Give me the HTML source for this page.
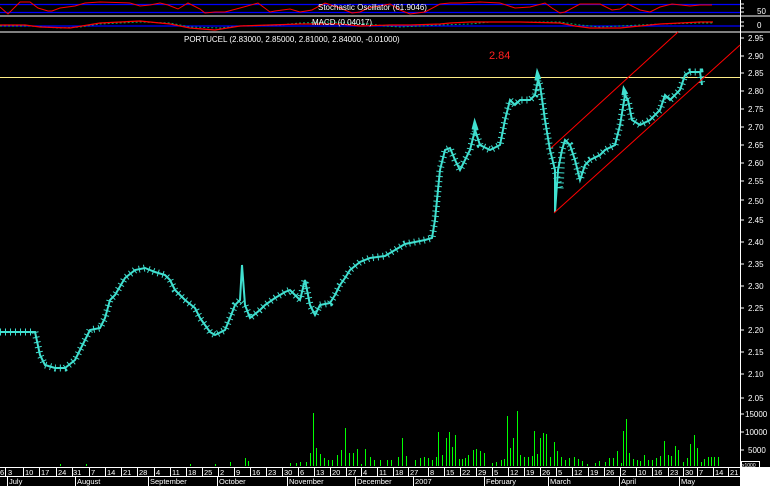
<!DOCTYPE html>
<html><head><meta charset="utf-8"><style>
html,body{margin:0;padding:0;background:#000;}
svg{display:block;}
text{font-family:"Liberation Sans",sans-serif;}
</style></head><body>
<svg width="770" height="486" viewBox="0 0 770 486" xmlns="http://www.w3.org/2000/svg">
<rect width="770" height="486" fill="#000"/>
<!-- Stochastic panel -->
<line x1="0" y1="4.5" x2="740" y2="4.5" stroke="#0000ff" stroke-width="1.2"/>
<line x1="0" y1="12.5" x2="740" y2="12.5" stroke="#0000ff" stroke-width="1.2"/>
<polyline fill="none" stroke="#ff0000" stroke-width="1" points="0,7 8,14 20,2 30,2 38,8 48,11 52,11 60,8 75,6 85,3 100,2 130,3 140,6 150,5 160,3 168,5 178,9 188,3 200,9 205,13 215,12 225,12 240,8 258,3 270,12 275,11 290,9 300,12 312,10 325,3 340,8 352,13 360,12 368,8 390,4 400,10 410,14 425,12 440,4 450,3 460,3 480,2 500,3 515,8 530,7 545,3 552,8 560,13 565,12 580,4 600,4 612,10 620,9 628,4 640,10 650,12 660,7 672,4 690,6 700,5 712,5"/>
<text x="318" y="10" font-size="8" fill="#fff">Stochastic Oscillator (61.9046)</text>
<line x1="0" y1="16" x2="770" y2="16" stroke="#fff"/>
<!-- MACD panel -->
<line x1="0" y1="26" x2="740" y2="26" stroke="#0000ff" stroke-width="1.2"/>
<polyline fill="none" stroke="#00aa66" stroke-width="1" stroke-dasharray="2 2" points="0,26 30,26 60,28 80,27 100,24 140,22 170,23 190,27 220,28 240,26 280,25 300,23 330,22 370,24 385,26 400,27 420,26 440,25 470,24 490,22 520,22 560,22 580,25 600,27 620,26 640,25 660,24 700,23 713,23"/>
<polyline fill="none" stroke="#ff0000" stroke-width="1.2" points="0,25 25,25 40,27 70,28 100,23 140,21 170,24 190,28 215,30 240,26 270,25 300,24 320,24 340,24 360,26 390,25 410,25 440,24 450,23 470,22 480,22 520,22 560,23 575,26 590,28 620,28 640,26 660,24 700,22 713,22"/>
<text x="312" y="25" font-size="8" fill="#fff">MACD (0.04017)</text>
<line x1="0" y1="32" x2="770" y2="32" stroke="#fff"/>
<!-- right axis -->
<line x1="740.5" y1="0" x2="740.5" y2="467" stroke="#fff"/>
<g stroke="#fff">
<line x1="740" y1="4" x2="744" y2="4"/><line x1="740" y1="8" x2="744" y2="8"/><line x1="740" y1="12" x2="744" y2="12"/>
<line x1="740" y1="22" x2="744" y2="22"/><line x1="740" y1="26" x2="744" y2="26"/>
</g>
<g font-size="8" fill="#fff">
<text x="757" y="14">50</text><text x="757" y="28">0</text>
<text x="748" y="41">2.95</text><text x="748" y="59">2.90</text><text x="748" y="76">2.85</text><text x="748" y="94">2.80</text><text x="748" y="112">2.75</text><text x="748" y="130">2.70</text><text x="748" y="148">2.65</text><text x="748" y="166">2.60</text><text x="748" y="184">2.55</text><text x="748" y="204">2.50</text><text x="748" y="223">2.45</text><text x="748" y="245">2.40</text><text x="748" y="267">2.35</text><text x="748" y="289">2.30</text><text x="748" y="311">2.25</text><text x="748" y="333">2.20</text><text x="748" y="355">2.15</text><text x="748" y="377">2.10</text><text x="748" y="401">2.05</text>
<text x="745" y="417">15000</text><text x="745" y="435">10000</text><text x="748" y="453">5000</text>
</g>
<rect x="741.5" y="461.5" width="18" height="6" fill="none" stroke="#fff"/>
<text x="742" y="467" font-size="5" fill="#fff">x1000</text>
<g stroke="#fff">
<line x1="740" y1="38" x2="744" y2="38"/><line x1="740" y1="56" x2="744" y2="56"/><line x1="740" y1="73" x2="744" y2="73"/><line x1="740" y1="91" x2="744" y2="91"/><line x1="740" y1="109" x2="744" y2="109"/><line x1="740" y1="127" x2="744" y2="127"/><line x1="740" y1="145" x2="744" y2="145"/><line x1="740" y1="163" x2="744" y2="163"/><line x1="740" y1="181" x2="744" y2="181"/><line x1="740" y1="200" x2="744" y2="200"/><line x1="740" y1="220" x2="744" y2="220"/><line x1="740" y1="242" x2="744" y2="242"/><line x1="740" y1="264" x2="744" y2="264"/><line x1="740" y1="286" x2="744" y2="286"/><line x1="740" y1="308" x2="744" y2="308"/><line x1="740" y1="330" x2="744" y2="330"/><line x1="740" y1="352" x2="744" y2="352"/><line x1="740" y1="374" x2="744" y2="374"/><line x1="740" y1="398" x2="744" y2="398"/><line x1="740" y1="414" x2="744" y2="414"/><line x1="740" y1="432" x2="744" y2="432"/><line x1="740" y1="450" x2="744" y2="450"/>
</g>
<!-- title -->
<text x="184" y="42" font-size="8" fill="#fff">PORTUCEL (2.83000, 2.85000, 2.81000, 2.84000, -0.01000)</text>
<text x="489" y="59" font-size="11" fill="#ff2020">2.84</text>
<!-- horizontal level line -->
<line x1="0" y1="77.5" x2="740" y2="77.5" stroke="#ffee88"/>
<!-- price -->
<g fill="none" stroke="#40e0d0" stroke-linejoin="miter">
<polyline stroke-width="7" stroke-dasharray="1 4" points="0,332 35,332 40,355 45,365 55,368 65,368 75,360 80,350 90,330 100,328 105,318 110,300 115,295 125,278 135,270 145,268 155,272 165,275 170,280 175,290 185,300 195,308 200,318 205,325 210,332 215,335 225,330 230,318 235,305 240,300 245,305 250,318 260,310 265,305 275,298 285,292 290,290 300,300 305,280 310,305 315,315 320,305 330,303 335,295 340,285 345,278 350,270 360,262 370,258 385,256 395,250 405,244 415,242 425,240 432,238 435,220 440,170 445,150 450,148 455,160 460,170 465,160 470,150 475,130 480,145 490,150 500,145 505,120 510,100 515,105 520,100 530,100 535,95 538,80 540,85 545,120 550,150 555,170 560,190 562,150 565,140 570,145 575,160 580,180 585,165 590,160 600,155 605,150 615,145 620,125 625,95 628,100 632,120 640,125 650,120 660,110 665,95 670,100 680,90 685,75 690,72 700,72 702,85"/>
<polyline stroke-width="2" points="0,332 35,332 40,355 45,365 55,368 65,368 75,360 80,350 90,330 100,328 105,318 110,300 115,295 125,278 135,270 145,268 155,272 165,275 170,280 175,290 185,300 195,308 200,318 205,325 210,332 215,335 225,330 230,318 235,305 240,300 242,265 245,305 250,318 260,310 265,305 275,298 285,292 290,290 300,300 305,280 310,305 315,315 320,305 330,303 335,295 340,285 345,278 350,270 360,262 370,258 385,256 395,250 405,244 415,242 425,240 432,238 435,220 440,170 445,150 450,148 455,160 460,170 465,160 470,150 475,130 480,145 490,150 500,145 505,120 510,100 515,105 520,100 530,100 535,95 538,80 540,85 545,120 550,150 555,170 555,212 558,170 562,150 565,140 570,145 575,160 580,180 585,165 590,160 600,155 605,150 615,145 620,125 625,95 628,100 632,120 640,125 650,120 660,110 665,95 670,100 680,90 685,75 690,72 700,72 702,85"/>
</g>
<!-- trend lines -->
<line x1="554" y1="213" x2="740" y2="45" stroke="#ff0000"/>
<line x1="551" y1="148" x2="678" y2="32" stroke="#ff0000"/>
<!-- volume -->
<g stroke="#00ff00" stroke-width="1" transform="translate(0.5,0)">
<line x1="60" y1="466" x2="60" y2="464"/><line x1="86" y1="466" x2="86" y2="464"/><line x1="190" y1="466" x2="190" y2="464"/><line x1="215" y1="466" x2="215" y2="464"/><line x1="230" y1="466" x2="230" y2="462"/><line x1="245" y1="466" x2="245" y2="458"/><line x1="248" y1="466" x2="248" y2="461"/><line x1="290" y1="466" x2="290" y2="463"/><line x1="296" y1="466" x2="296" y2="463"/><line x1="300" y1="466" x2="300" y2="462"/><line x1="306" y1="466" x2="306" y2="462"/><line x1="310" y1="466" x2="310" y2="453"/><line x1="313" y1="466" x2="313" y2="413"/><line x1="316" y1="466" x2="316" y2="448"/><line x1="320" y1="466" x2="320" y2="454"/><line x1="324" y1="466" x2="324" y2="458"/><line x1="328" y1="466" x2="328" y2="460"/><line x1="332" y1="466" x2="332" y2="460"/><line x1="337" y1="466" x2="337" y2="455"/><line x1="341" y1="466" x2="341" y2="450"/><line x1="345" y1="466" x2="345" y2="428"/><line x1="349" y1="466" x2="349" y2="453"/><line x1="353" y1="466" x2="353" y2="453"/><line x1="357" y1="466" x2="357" y2="449"/><line x1="361" y1="466" x2="361" y2="464"/><line x1="365" y1="466" x2="365" y2="449"/><line x1="370" y1="466" x2="370" y2="457"/><line x1="374" y1="466" x2="374" y2="460"/><line x1="380" y1="466" x2="380" y2="460"/><line x1="387" y1="466" x2="387" y2="460"/><line x1="391" y1="466" x2="391" y2="460"/><line x1="398" y1="466" x2="398" y2="457"/><line x1="402" y1="466" x2="402" y2="438"/><line x1="406" y1="466" x2="406" y2="456"/><line x1="415" y1="466" x2="415" y2="460"/><line x1="420" y1="466" x2="420" y2="458"/><line x1="424" y1="466" x2="424" y2="457"/><line x1="428" y1="466" x2="428" y2="458"/><line x1="432" y1="466" x2="432" y2="460"/><line x1="436" y1="466" x2="436" y2="457"/><line x1="438" y1="466" x2="438" y2="432"/><line x1="442" y1="466" x2="442" y2="455"/><line x1="446" y1="466" x2="446" y2="438"/><line x1="449" y1="466" x2="449" y2="432"/><line x1="452" y1="466" x2="452" y2="447"/><line x1="455" y1="466" x2="455" y2="435"/><line x1="459" y1="466" x2="459" y2="459"/><line x1="462" y1="466" x2="462" y2="459"/><line x1="465" y1="466" x2="465" y2="458"/><line x1="468" y1="466" x2="468" y2="455"/><line x1="473" y1="466" x2="473" y2="450"/><line x1="476" y1="466" x2="476" y2="449"/><line x1="480" y1="466" x2="480" y2="451"/><line x1="484" y1="466" x2="484" y2="453"/><line x1="492" y1="466" x2="492" y2="463"/><line x1="496" y1="466" x2="496" y2="462"/><line x1="501" y1="466" x2="501" y2="460"/><line x1="504" y1="466" x2="504" y2="459"/><line x1="507" y1="466" x2="507" y2="416"/><line x1="510" y1="466" x2="510" y2="448"/><line x1="513" y1="466" x2="513" y2="438"/><line x1="517" y1="466" x2="517" y2="411"/><line x1="520" y1="466" x2="520" y2="455"/><line x1="524" y1="466" x2="524" y2="457"/><line x1="528" y1="466" x2="528" y2="457"/><line x1="532" y1="466" x2="532" y2="456"/><line x1="534" y1="466" x2="534" y2="431"/><line x1="537" y1="466" x2="537" y2="454"/><line x1="540" y1="466" x2="540" y2="438"/><line x1="543" y1="466" x2="543" y2="433"/><line x1="546" y1="466" x2="546" y2="434"/><line x1="550" y1="466" x2="550" y2="457"/><line x1="554" y1="466" x2="554" y2="442"/><line x1="557" y1="466" x2="557" y2="451"/><line x1="561" y1="466" x2="561" y2="457"/><line x1="565" y1="466" x2="565" y2="460"/><line x1="569" y1="466" x2="569" y2="458"/><line x1="574" y1="466" x2="574" y2="457"/><line x1="578" y1="466" x2="578" y2="459"/><line x1="582" y1="466" x2="582" y2="461"/><line x1="587" y1="466" x2="587" y2="464"/><line x1="595" y1="466" x2="595" y2="463"/><line x1="599" y1="466" x2="599" y2="461"/><line x1="605" y1="466" x2="605" y2="462"/><line x1="609" y1="466" x2="609" y2="458"/><line x1="613" y1="466" x2="613" y2="458"/><line x1="617" y1="466" x2="617" y2="451"/><line x1="621" y1="466" x2="621" y2="463"/><line x1="623" y1="466" x2="623" y2="431"/><line x1="626" y1="466" x2="626" y2="419"/><line x1="629" y1="466" x2="629" y2="453"/><line x1="633" y1="466" x2="633" y2="459"/><line x1="637" y1="466" x2="637" y2="460"/><line x1="640" y1="466" x2="640" y2="461"/><line x1="644" y1="466" x2="644" y2="455"/><line x1="648" y1="466" x2="648" y2="460"/><line x1="652" y1="466" x2="652" y2="460"/><line x1="656" y1="466" x2="656" y2="458"/><line x1="660" y1="466" x2="660" y2="456"/><line x1="664" y1="466" x2="664" y2="441"/><line x1="668" y1="466" x2="668" y2="455"/><line x1="671" y1="466" x2="671" y2="456"/><line x1="675" y1="466" x2="675" y2="446"/><line x1="678" y1="466" x2="678" y2="450"/><line x1="683" y1="466" x2="683" y2="462"/><line x1="687" y1="466" x2="687" y2="458"/><line x1="690" y1="466" x2="690" y2="444"/><line x1="694" y1="466" x2="694" y2="435"/><line x1="697" y1="466" x2="697" y2="448"/><line x1="701" y1="466" x2="701" y2="462"/><line x1="704" y1="466" x2="704" y2="459"/><line x1="708" y1="466" x2="708" y2="457"/><line x1="711" y1="466" x2="711" y2="457"/><line x1="714" y1="466" x2="714" y2="457"/><line x1="718" y1="466" x2="718" y2="457"/>
</g>
<!-- date axis -->
<line x1="0" y1="467.5" x2="740" y2="467.5" stroke="#fff"/>
<line x1="0" y1="476.5" x2="740" y2="476.5" stroke="#fff"/>
<rect x="740" y="467" width="30" height="19" fill="#fff"/>
<g stroke="#fff">
<line x1="5.5" y1="467" x2="5.5" y2="476"/><line x1="23.5" y1="467" x2="23.5" y2="476"/><line x1="39.5" y1="467" x2="39.5" y2="476"/><line x1="56.5" y1="467" x2="56.5" y2="476"/><line x1="72.5" y1="467" x2="72.5" y2="476"/><line x1="89.5" y1="467" x2="89.5" y2="476"/><line x1="105.5" y1="467" x2="105.5" y2="476"/><line x1="121.5" y1="467" x2="121.5" y2="476"/><line x1="137.5" y1="467" x2="137.5" y2="476"/><line x1="154.5" y1="467" x2="154.5" y2="476"/><line x1="170.5" y1="467" x2="170.5" y2="476"/><line x1="186.5" y1="467" x2="186.5" y2="476"/><line x1="202.5" y1="467" x2="202.5" y2="476"/><line x1="218.5" y1="467" x2="218.5" y2="476"/><line x1="234.5" y1="467" x2="234.5" y2="476"/><line x1="250.5" y1="467" x2="250.5" y2="476"/><line x1="266.5" y1="467" x2="266.5" y2="476"/><line x1="282.5" y1="467" x2="282.5" y2="476"/><line x1="298.5" y1="467" x2="298.5" y2="476"/><line x1="314.5" y1="467" x2="314.5" y2="476"/><line x1="330.5" y1="467" x2="330.5" y2="476"/><line x1="346.5" y1="467" x2="346.5" y2="476"/><line x1="361.5" y1="467" x2="361.5" y2="476"/><line x1="377.5" y1="467" x2="377.5" y2="476"/><line x1="393.5" y1="467" x2="393.5" y2="476"/><line x1="408.5" y1="467" x2="408.5" y2="476"/><line x1="428.5" y1="467" x2="428.5" y2="476"/><line x1="444.5" y1="467" x2="444.5" y2="476"/><line x1="460.5" y1="467" x2="460.5" y2="476"/><line x1="476.5" y1="467" x2="476.5" y2="476"/><line x1="492.5" y1="467" x2="492.5" y2="476"/><line x1="508.5" y1="467" x2="508.5" y2="476"/><line x1="524.5" y1="467" x2="524.5" y2="476"/><line x1="540.5" y1="467" x2="540.5" y2="476"/><line x1="556.5" y1="467" x2="556.5" y2="476"/><line x1="572.5" y1="467" x2="572.5" y2="476"/><line x1="588.5" y1="467" x2="588.5" y2="476"/><line x1="604.5" y1="467" x2="604.5" y2="476"/><line x1="620.5" y1="467" x2="620.5" y2="476"/><line x1="636.5" y1="467" x2="636.5" y2="476"/><line x1="652.5" y1="467" x2="652.5" y2="476"/><line x1="668.5" y1="467" x2="668.5" y2="476"/><line x1="683.5" y1="467" x2="683.5" y2="476"/><line x1="697.5" y1="467" x2="697.5" y2="476"/><line x1="713.5" y1="467" x2="713.5" y2="476"/><line x1="728.5" y1="467" x2="728.5" y2="476"/>
<line x1="7.5" y1="476" x2="7.5" y2="486"/><line x1="75.5" y1="476" x2="75.5" y2="486"/><line x1="148.5" y1="476" x2="148.5" y2="486"/><line x1="217.5" y1="476" x2="217.5" y2="486"/><line x1="287.5" y1="476" x2="287.5" y2="486"/><line x1="355.5" y1="476" x2="355.5" y2="486"/><line x1="413.5" y1="476" x2="413.5" y2="486"/><line x1="484.5" y1="476" x2="484.5" y2="486"/><line x1="548.5" y1="476" x2="548.5" y2="486"/><line x1="619.5" y1="476" x2="619.5" y2="486"/><line x1="679.5" y1="476" x2="679.5" y2="486"/>
</g>
<g font-size="7.5" fill="#fff">
<text x="0" y="475">6</text><text x="8" y="475">3</text><text x="25" y="475">10</text><text x="41" y="475">17</text><text x="58" y="475">24</text><text x="73" y="475">31</text><text x="91" y="475">7</text><text x="107" y="475">14</text><text x="123" y="475">21</text><text x="139" y="475">28</text><text x="156" y="475">4</text><text x="172" y="475">11</text><text x="188" y="475">18</text><text x="204" y="475">25</text><text x="220" y="475">2</text><text x="236" y="475">9</text><text x="252" y="475">16</text><text x="268" y="475">23</text><text x="284" y="475">30</text><text x="300" y="475">6</text><text x="316" y="475">13</text><text x="332" y="475">20</text><text x="348" y="475">27</text><text x="363" y="475">4</text><text x="379" y="475">11</text><text x="395" y="475">18</text><text x="410" y="475">27</text><text x="430" y="475">8</text><text x="446" y="475">15</text><text x="462" y="475">22</text><text x="478" y="475">29</text><text x="494" y="475">5</text><text x="510" y="475">12</text><text x="526" y="475">19</text><text x="542" y="475">26</text><text x="558" y="475">5</text><text x="574" y="475">12</text><text x="590" y="475">19</text><text x="606" y="475">26</text><text x="622" y="475">2</text><text x="638" y="475">10</text><text x="654" y="475">16</text><text x="670" y="475">23</text><text x="685" y="475">30</text><text x="699" y="475">7</text><text x="715" y="475">14</text><text x="730" y="475">21</text>
<text x="9" y="484">July</text><text x="77" y="484">August</text><text x="150" y="484">September</text><text x="219" y="484">October</text><text x="289" y="484">November</text><text x="357" y="484">December</text><text x="415" y="484">2007</text><text x="486" y="484">February</text><text x="550" y="484">March</text><text x="621" y="484">April</text><text x="681" y="484">May</text>
</g>
</svg>
</body></html>
